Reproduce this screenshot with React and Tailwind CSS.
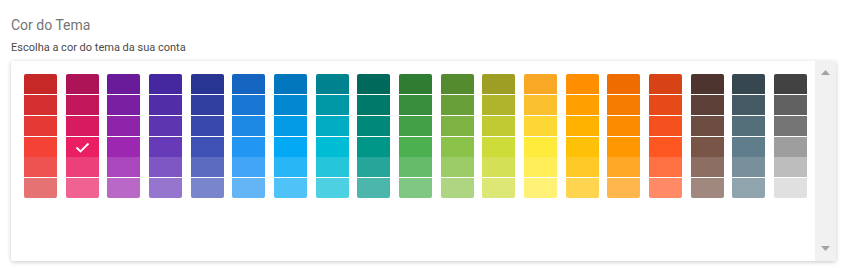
import React from 'react';

const palettes = [
  ['bg-[#C62828]', 'bg-[#D32F2F]', 'bg-[#E53935]', 'bg-[#F44336]', 'bg-[#EF5350]', 'bg-[#E57373]'],
  ['bg-[#AD1457]', 'bg-[#C2185B]', 'bg-[#D81B60]', 'bg-[#E91E63]', 'bg-[#EC407A]', 'bg-[#F06292]'],
  ['bg-[#6A1B9A]', 'bg-[#7B1FA2]', 'bg-[#8E24AA]', 'bg-[#9C27B0]', 'bg-[#AB47BC]', 'bg-[#BA68C8]'],
  ['bg-[#4527A0]', 'bg-[#512DA8]', 'bg-[#5E35B1]', 'bg-[#673AB7]', 'bg-[#7E57C2]', 'bg-[#9575CD]'],
  ['bg-[#283593]', 'bg-[#303F9F]', 'bg-[#3949AB]', 'bg-[#3F51B5]', 'bg-[#5C6BC0]', 'bg-[#7986CB]'],
  ['bg-[#1565C0]', 'bg-[#1976D2]', 'bg-[#1E88E5]', 'bg-[#2196F3]', 'bg-[#42A5F5]', 'bg-[#64B5F6]'],
  ['bg-[#0277BD]', 'bg-[#0288D1]', 'bg-[#039BE5]', 'bg-[#03A9F4]', 'bg-[#29B6F6]', 'bg-[#4FC3F7]'],
  ['bg-[#00838F]', 'bg-[#0097A7]', 'bg-[#00ACC1]', 'bg-[#00BCD4]', 'bg-[#26C6DA]', 'bg-[#4DD0E1]'],
  ['bg-[#00695C]', 'bg-[#00796B]', 'bg-[#00897B]', 'bg-[#009688]', 'bg-[#26A69A]', 'bg-[#4DB6AC]'],
  ['bg-[#2E7D32]', 'bg-[#388E3C]', 'bg-[#43A047]', 'bg-[#4CAF50]', 'bg-[#66BB6A]', 'bg-[#81C784]'],
  ['bg-[#558B2F]', 'bg-[#689F38]', 'bg-[#7CB342]', 'bg-[#8BC34A]', 'bg-[#9CCC65]', 'bg-[#AED581]'],
  ['bg-[#9E9D24]', 'bg-[#AFB42B]', 'bg-[#C0CA33]', 'bg-[#CDDC39]', 'bg-[#D4E157]', 'bg-[#DCE775]'],
  ['bg-[#F9A825]', 'bg-[#FBC02D]', 'bg-[#FDD835]', 'bg-[#FFEB3B]', 'bg-[#FFEE58]', 'bg-[#FFF176]'],
  ['bg-[#FF8F00]', 'bg-[#FFA000]', 'bg-[#FFB300]', 'bg-[#FFC107]', 'bg-[#FFCA28]', 'bg-[#FFD54F]'],
  ['bg-[#EF6C00]', 'bg-[#F57C00]', 'bg-[#FB8C00]', 'bg-[#FF9800]', 'bg-[#FFA726]', 'bg-[#FFB74D]'],
  ['bg-[#D84315]', 'bg-[#E64A19]', 'bg-[#F4511E]', 'bg-[#FF5722]', 'bg-[#FF7043]', 'bg-[#FF8A65]'],
  ['bg-[#4E342E]', 'bg-[#5D4037]', 'bg-[#6D4C41]', 'bg-[#795548]', 'bg-[#8D6E63]', 'bg-[#A1887F]'],
  ['bg-[#37474F]', 'bg-[#455A64]', 'bg-[#546E7A]', 'bg-[#607D8B]', 'bg-[#78909C]', 'bg-[#90A4AE]'],
  ['bg-[#424242]', 'bg-[#616161]', 'bg-[#757575]', 'bg-[#9E9E9E]', 'bg-[#BDBDBD]', 'bg-[#E0E0E0]'],
];

// white line between rows, except between 500 and 400
const gapRows = [1, 2, 3, 5];

const selected = { col: 1, row: 3 };

export default function App() {
  return (
    <div className="w-[842px] h-[268px] bg-white pl-[11px] pt-[16px] font-['Roboto',sans-serif]">
      <h2 className="text-[14px] leading-[18px] text-[#757575]">Cor do Tema</h2>
      <p className="mt-[7px] text-[11px] leading-[14px] text-[#4a4a4a]">
        Escolha a cor do tema da sua conta
      </p>
      <div className="mt-[6px] w-[825px] h-[200px] flex bg-white rounded-[2px] shadow-[0_1px_4px_rgba(0,0,0,0.22)]">
        <div className="flex-1 pl-[13px] pr-[8px] pt-[13px]">
          <div className="flex justify-between">
            {palettes.map((col, ci) => (
              <div key={ci} className="w-[33px] flex flex-col rounded-[2px] overflow-hidden">
                {col.map((c, ri) => (
                  <div
                    key={ri}
                    className={`${c} h-[20px] flex items-center justify-center ${gapRows.includes(ri) ? 'mt-px' : ''}`}
                  >
                    {selected.col === ci && selected.row === ri && (
                      <svg width="15" height="11" viewBox="0 0 15 11" fill="none">
                        <path d="M1.5 5.5 L5.5 9.5 L13.5 1.5" stroke="white" strokeWidth="1.8" />
                      </svg>
                    )}
                  </div>
                ))}
              </div>
            ))}
          </div>
        </div>
        <div className="w-[21px] bg-[#f1f1f1] flex flex-col justify-between items-center pt-[9px] pb-[10px] rounded-r-[2px]">
          <svg width="9" height="5" viewBox="0 0 9 5">
            <polygon points="4.5,0 9,5 0,5" fill="#a3a3a3" />
          </svg>
          <svg width="9" height="5" viewBox="0 0 9 5">
            <polygon points="0,0 9,0 4.5,5" fill="#a3a3a3" />
          </svg>
        </div>
      </div>
    </div>
  );
}
